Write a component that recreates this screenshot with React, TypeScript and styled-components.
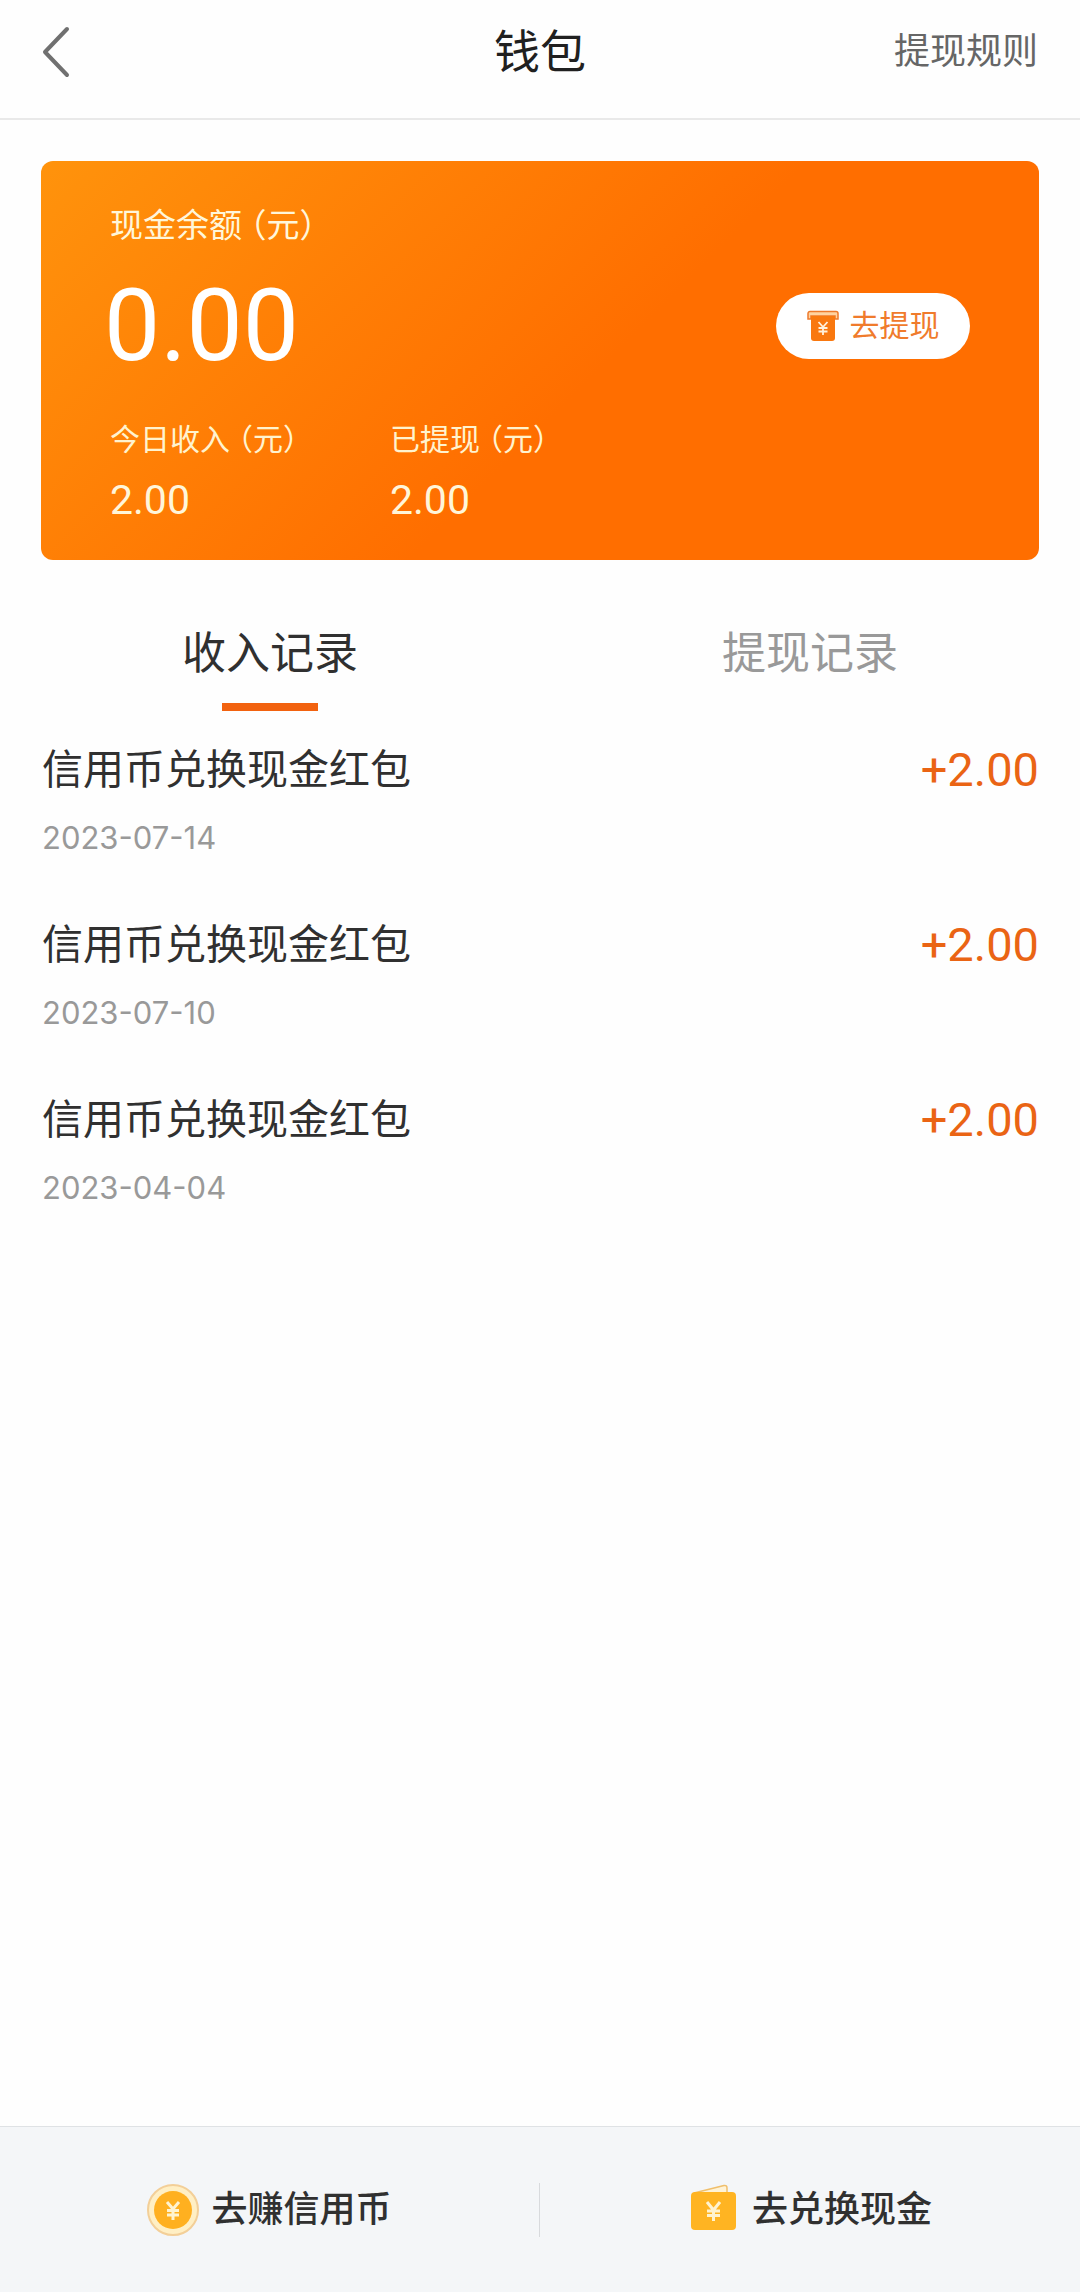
import React, { useState } from "react";
import styled, { createGlobalStyle } from "styled-components";

const GlobalStyle = createGlobalStyle`
  * { box-sizing: border-box; }
  body {
    margin: 0;
    background: #fefefe;
    color: #303030;
    font-family: Roboto, "Noto Sans CJK SC", sans-serif;
  }
  button { border: 0; padding: 0; background: none; font: inherit; color: inherit; cursor: pointer; }
  h1, h2, p, dl, dt, dd, ul { margin: 0; padding: 0; font-weight: 400; }
  ul { list-style: none; }
  svg { display: block; flex: none; }
`;

const Page = styled.div`
  min-height: 100vh;
  display: flex;
  flex-direction: column;
`;

const Header = styled.header`
  display: grid;
  grid-template-columns: 1fr auto 1fr;
  align-items: center;
  height: 120px;
  padding: 0 42px 14px;
  border-bottom: 2px solid #e9e9e9;
`;

const BackButton = styled.button`
  justify-self: start;
`;

const Title = styled.h1`
  font-size: 46px;
  line-height: 64px;
  color: #202020;
`;

const RulesLink = styled.a`
  justify-self: end;
  font-size: 36px;
  line-height: 64px;
  color: #666;
  text-decoration: none;
`;

const Main = styled.main`
  flex: 1;
  padding: 41px 41px 0;
`;

const Card = styled.section`
  display: flex;
  flex-direction: column;
  padding: 41px 69px 36px;
  border-radius: 12px;
  color: #fff;
  background: linear-gradient(135deg, #ff930c 0%, #ff6e00 55%);
`;

const CardLabel = styled.h2`
  font-size: 33px;
  line-height: 48px;
  color: #fff6da;
`;

const Unit = styled.span`
  margin-left: 8px;
  font-feature-settings: "halt";
`;

const BalanceRow = styled.div`
  display: flex;
  align-items: center;
  justify-content: space-between;
  margin: 20px 0 20px -6px;
`;

const Balance = styled.p`
  font-size: 100px;
  line-height: 112px;
`;

const WithdrawButton = styled.button`
  display: flex;
  align-items: center;
  justify-content: center;
  gap: 11px;
  width: 194px;
  height: 66px;
  border-radius: 33px;
  background: #fff;
  color: #f07b2c;
  font-size: 30px;
  line-height: 40px;
`;

const Stats = styled.dl`
  display: grid;
  grid-template-columns: 280px 1fr;
  margin-top: 14px;
`;

const StatName = styled.dt`
  font-size: 30px;
  line-height: 48px;
  color: #fff3cf;
`;

const StatValue = styled.dd`
  margin-top: 12px;
  font-size: 41px;
  line-height: 48px;
  color: #fff6da;
`;

const Tabs = styled.div`
  display: grid;
  grid-template-columns: 1fr 1fr;
  margin: 62px -41px 0;
`;

const Tab = styled.button<{ $active: boolean }>`
  display: flex;
  flex-direction: column;
  align-items: center;
  gap: 17px;
  font-size: 44px;
  line-height: 64px;
  color: ${(p) => (p.$active ? "#303030" : "#999")};

  &::after {
    content: "";
    width: 96px;
    height: 8px;
    background: ${(p) => (p.$active ? "#f2620f" : "transparent")};
  }
`;

const Records = styled.ul`
  display: flex;
  flex-direction: column;
  gap: 51px;
  padding: 27px 0 0 1px;
`;

const RecordItem = styled.li`
  display: grid;
  grid-template-columns: 1fr auto;
  row-gap: 12px;
`;

const RecordName = styled.p`
  font-size: 41px;
  line-height: 64px;
`;

const Amount = styled.p`
  font-size: 47px;
  line-height: 64px;
  color: #ea6414;
`;

const RecordDate = styled.time`
  font-family: Inter, "Liberation Sans", sans-serif;
  font-size: 31px;
  line-height: 48px;
  color: #999;
`;

const Footer = styled.footer`
  display: grid;
  grid-template-columns: 1fr 1fr;
  align-items: center;
  height: 166px;
  border-top: 1px solid #dfe2e5;
  background: #f4f6f8;
`;

const FooterAction = styled.button`
  display: flex;
  align-items: center;
  justify-content: center;
  gap: 12px;
  height: 54px;
  font-size: 36px;
  line-height: 54px;
  font-weight: 500;

  &:first-child { border-right: 1px solid #d8dadd; }
`;

const BackIcon = () => (
  <svg width="28" height="52" viewBox="0 0 28 52" fill="none" stroke="#707070" strokeWidth="4" strokeLinecap="round" strokeLinejoin="round">
    <path d="M25 3 3 26 25 49" />
  </svg>
);

const WithdrawIcon = () => (
  <svg width="32" height="32" viewBox="0 0 32 32" fill="none">
    <path d="M3 1.500h26a2 2 0 0 1 2 2V9h-3V6H4v3H1V3.500a2 2 0 0 1 2-2z" fill="#ffd3a0" stroke="#ee7a2c" strokeWidth="1.500" />
    <path d="M4 6h24v22a3 3 0 0 1-3 3H7a3 3 0 0 1-3-3z" fill="#f9780f" />
    <path d="m11.500 12 4.500 5 4.500-5M16 17v8M11.500 18h9M11.500 21.500h9" stroke="#fff1dc" strokeWidth="1.800" />
  </svg>
);

const CoinIcon = () => (
  <svg width="52" height="52" viewBox="0 0 52 52" fill="none">
    <circle cx="26" cy="26" r="25" fill="#ffefc4" stroke="#f3cf98" strokeWidth="2" />
    <circle cx="26" cy="26" r="19" fill="#ffb020" />
    <path d="m20 18 6 7 6-7M26 25v11M20 26.500h12M20 31h12" stroke="#fff3d0" strokeWidth="3" />
  </svg>
);

const WalletIcon = () => (
  <svg width="52" height="52" viewBox="0 0 52 52" fill="none">
    <path d="M6 9 36 1.500q3-.5 3 2.500v6" fill="#fff3d6" stroke="#efbf6c" strokeWidth="1.500" />
    <rect x="3" y="8" width="45" height="38" rx="4" fill="#ffb422" />
    <path d="m19 18 6.500 8 6.500-8M25.500 26v11M19 27h13M19 31.500h13" stroke="#fff3d0" strokeWidth="3" />
  </svg>
);

const records = [
  { date: "2023-07-14", amount: "+2.00" },
  { date: "2023-07-10", amount: "+2.00" },
  { date: "2023-04-04", amount: "+2.00" },
];

const tabs = ["收入记录", "提现记录"];

export default function App() {
  const [active, setActive] = useState(0);
  return (
    <Page>
      <GlobalStyle />
      <Header>
        <BackButton aria-label="返回"><BackIcon /></BackButton>
        <Title>钱包</Title>
        <RulesLink href="#rules">提现规则</RulesLink>
      </Header>
      <Main>
        <Card>
          <CardLabel>现金余额<Unit>（元）</Unit></CardLabel>
          <BalanceRow>
            <Balance>0.00</Balance>
            <WithdrawButton><WithdrawIcon />去提现</WithdrawButton>
          </BalanceRow>
          <Stats>
            <div>
              <StatName>今日收入<Unit>（元）</Unit></StatName>
              <StatValue>2.00</StatValue>
            </div>
            <div>
              <StatName>已提现<Unit>（元）</Unit></StatName>
              <StatValue>2.00</StatValue>
            </div>
          </Stats>
        </Card>
        <Tabs role="tablist">
          {tabs.map((name, i) => (
            <Tab key={name} role="tab" aria-selected={i === active} $active={i === active} onClick={() => setActive(i)}>
              {name}
            </Tab>
          ))}
        </Tabs>
        <Records>
          {records.map((r) => (
            <RecordItem key={r.date}>
              <RecordName>信用币兑换现金红包</RecordName>
              <Amount>{r.amount}</Amount>
              <RecordDate dateTime={r.date}>{r.date}</RecordDate>
            </RecordItem>
          ))}
        </Records>
      </Main>
      <Footer>
        <FooterAction><CoinIcon />去赚信用币</FooterAction>
        <FooterAction><WalletIcon />去兑换现金</FooterAction>
      </Footer>
    </Page>
  );
}
